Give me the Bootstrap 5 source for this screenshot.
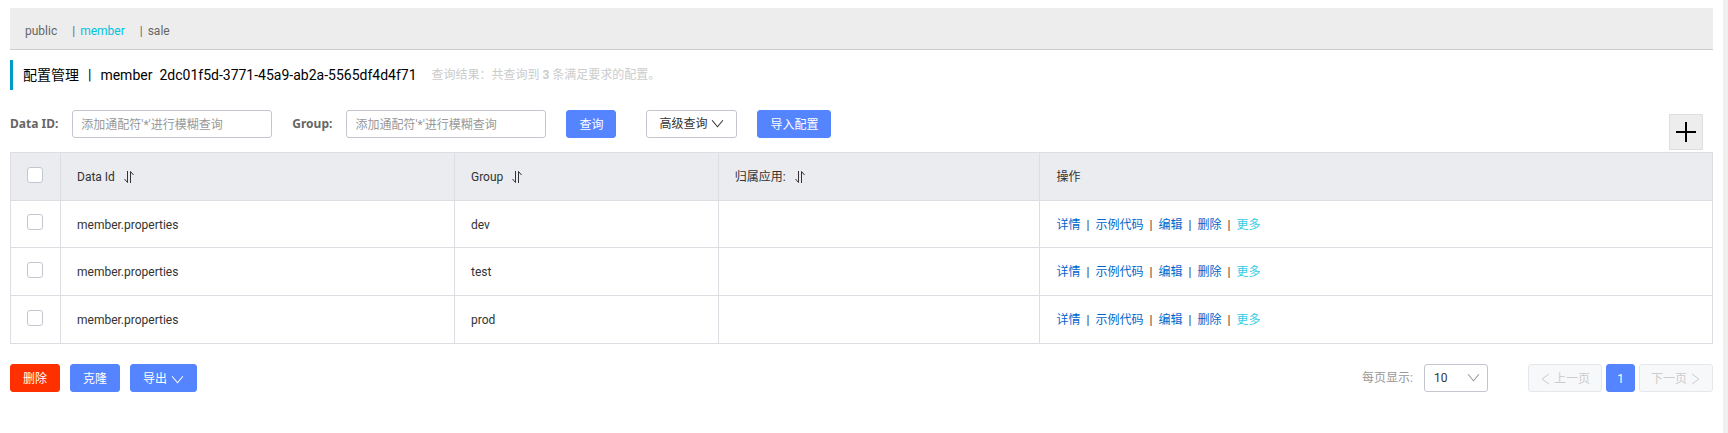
<!DOCTYPE html>
<html lang="zh-CN">
<head>
<meta charset="utf-8">
<meta name="viewport" content="width=device-width, initial-scale=1">
<title>配置管理</title>
<link href="https://cdn.jsdelivr.net/npm/bootstrap@5.3.0/dist/css/bootstrap.min.css" rel="stylesheet">
<style>
body{font-family:Roboto,"Noto Sans CJK SC",sans-serif;font-size:12px;line-height:18px;color:#333}
a{text-decoration:none}
svg{display:block;fill:none;stroke:currentColor;flex:none}
.page{min-height:100vh;padding:8px 10px;border-right:5px solid #f0f0f0}
.ns-bar{background:#ededed;border-bottom:1px solid #ccc;padding:14px 15px 9px;color:#666}
.ns-bar a{color:#666}
.ns-bar a.active{color:#00c1de}
.ns-bar li+li::before{content:"|";margin:0 5px 0 15px;color:#666}
.title-bar{margin-top:10px;height:30px;border-left:3px solid #09c;padding-left:10px}
.title-bar h1{font-size:14px;line-height:30px;font-weight:400;color:#000}
.title-bar .sep{margin:0 9px}
.title-bar .ns-id{margin-left:7px}
.hint{color:#ccc;margin-left:15px}
.tools{margin-top:20px;height:42px}
.tools label{font-family:"Noto Sans",sans-serif;font-weight:700;color:#666;line-height:28px;margin-right:14px}
.gap-before{margin-left:20px}
.gap-wide{margin-left:30px}
.field{width:200px;height:28px;border:1px solid #c4c6cf;border-radius:3px;padding:1px 8px 0;color:#333;font-size:12px}
.field::placeholder{color:#999;opacity:1}
.btn{--bs-btn-font-size:12px;--bs-btn-line-height:18px;--bs-btn-padding-x:12px;--bs-btn-padding-y:4px;--bs-btn-border-radius:3px;height:28px;padding-top:5px;padding-bottom:3px}
.btn-primary{--bs-btn-bg:#5584ff;--bs-btn-border-color:#5584ff}
.btn-danger{--bs-btn-bg:#ff3000;--bs-btn-border-color:#ff3000}
.btn-plain{--bs-btn-bg:#fff;--bs-btn-border-color:#c4c6cf;--bs-btn-color:#333;padding-top:2px}
.btn-add{width:34px;height:36px;background:#ededed;border:1px solid #dcdee3;color:#000;margin:0 10px 2px 0}
.grid-table{table-layout:fixed;--bs-table-color:#333;--bs-table-border-color:#dcdee3;border-color:#dcdee3}
.grid-table th{background:#ebecf0;font-weight:400;height:48px}
.grid-table td{height:48px}
.grid-table tbody tr:first-child td{height:47px}
.grid-table>:not(caption)>*>*{padding:1px 16px 0;vertical-align:middle}
.grid-table input{display:block;width:16px;height:16px;margin:0 0 5px;border:1px solid #c4c6cf;border-radius:3px;background-color:#fff}
.grid-table td a{color:#06c}
.grid-table td a.more{color:#33cde5}
.ops i{font-style:normal;width:15px;text-align:center}
.c-check{width:50px}.c-data{width:23.15%}.c-group{width:15.5%}.c-app{width:18.9%}
.foot{margin-top:20px}
.size-box{position:relative;color:#999}
.size-box label{margin-right:11px}
.size-box select{appearance:none;width:64px;height:28px;border:1px solid #c4c6cf;border-radius:3px;background:#fff;padding:0 9px;color:#333}
.size-box svg{position:absolute;right:8px;top:7px;pointer-events:none}
.pages{margin-left:40px}
.btn-page{--bs-btn-disabled-bg:#f7f8fa;--bs-btn-disabled-border-color:#e6e7eb;--bs-btn-disabled-color:#ccc;--bs-btn-disabled-opacity:1;width:74px}
.btn-num{width:29px}
</style>
</head>
<body>
<svg width="0" height="0" class="position-absolute" aria-hidden="true">
<symbol id="down" viewBox="0 0 12 12"><path d="M1 3l5 6 5-6"/></symbol>
<symbol id="sort" viewBox="0 0 12 14"><path d="M4.500 1v11.500L1.500 9M7.500 13V1.500L10.500 5"/></symbol>
</svg>
<main class="page">
<nav class="ns-bar"><ul class="list-unstyled d-flex mb-0">
<li><a href="#">public</a></li><li><a href="#" class="active">member</a></li><li><a href="#">sale</a></li>
</ul></nav>
<header class="title-bar d-flex align-items-center">
<h1 class="mb-0">配置管理<span class="sep">|</span>member<span class="ns-id">2dc01f5d-3771-45a9-ab2a-5565df4d4f71</span></h1>
<span class="hint">查询结果：共查询到 <strong>3</strong> 条满足要求的配置。</span>
</header>
<form class="tools d-flex align-items-start">
<label for="dataId">Data ID:</label><input id="dataId" class="field" placeholder="添加通配符'*'进行模糊查询">
<label for="group" class="gap-before">Group:</label><input id="group" class="field" placeholder="添加通配符'*'进行模糊查询">
<button type="button" class="btn btn-primary gap-before">查询</button>
<button type="button" class="btn btn-plain gap-wide d-flex align-items-center">高级查询<svg class="ms-1" width="13" height="13"><use href="#down"/></svg></button>
<button type="button" class="btn btn-primary gap-before">导入配置</button>
<button type="button" class="btn-add d-flex align-items-center justify-content-center p-0 ms-auto align-self-end" aria-label="新建配置"><svg width="20" height="20" stroke-width="2"><path d="M10 0v20M0 10h20"/></svg></button>
</form>
<table class="table table-bordered grid-table mb-0">
<colgroup><col class="c-check"><col class="c-data"><col class="c-group"><col class="c-app"><col></colgroup>
<thead><tr>
<th><input type="checkbox" class="form-check-input" aria-label="全选"></th>
<th><span class="d-flex align-items-center gap-2">Data Id<svg width="12" height="14"><use href="#sort"/></svg></span></th>
<th><span class="d-flex align-items-center gap-2">Group<svg width="12" height="14"><use href="#sort"/></svg></span></th>
<th><span class="d-flex align-items-center gap-2">归属应用:<svg width="12" height="14"><use href="#sort"/></svg></span></th>
<th>操作</th>
</tr></thead>
<tbody>
<tr><td><input type="checkbox" class="form-check-input" aria-label="dev"></td><td>member.properties</td><td>dev</td><td></td><td><div class="ops d-flex"><a href="#">详情</a><i>|</i><a href="#">示例代码</a><i>|</i><a href="#">编辑</a><i>|</i><a href="#">删除</a><i>|</i><a href="#" class="more">更多</a></div></td></tr>
<tr><td><input type="checkbox" class="form-check-input" aria-label="test"></td><td>member.properties</td><td>test</td><td></td><td><div class="ops d-flex"><a href="#">详情</a><i>|</i><a href="#">示例代码</a><i>|</i><a href="#">编辑</a><i>|</i><a href="#">删除</a><i>|</i><a href="#" class="more">更多</a></div></td></tr>
<tr><td><input type="checkbox" class="form-check-input" aria-label="prod"></td><td>member.properties</td><td>prod</td><td></td><td><div class="ops d-flex"><a href="#">详情</a><i>|</i><a href="#">示例代码</a><i>|</i><a href="#">编辑</a><i>|</i><a href="#">删除</a><i>|</i><a href="#" class="more">更多</a></div></td></tr>
</tbody>
</table>
<footer class="foot d-flex align-items-center">
<div class="d-flex" style="gap:10px">
<button type="button" class="btn btn-danger">删除</button>
<button type="button" class="btn btn-primary">克隆</button>
<button type="button" class="btn btn-primary d-flex align-items-center">导出<svg class="ms-1" width="13" height="13"><use href="#down"/></svg></button>
</div>
<div class="size-box d-flex align-items-center ms-auto"><label for="size">每页显示:</label><select id="size"><option>10</option><option>20</option></select><svg width="13" height="13"><use href="#down"/></svg></div>
<div class="pages d-flex gap-1">
<button type="button" class="btn btn-page d-flex align-items-center justify-content-center px-0" disabled><svg class="me-1" width="10" height="12"><path d="M9 1L2 6l7 5"/></svg>上一页</button>
<button type="button" class="btn btn-primary btn-num px-0">1</button>
<button type="button" class="btn btn-page d-flex align-items-center justify-content-center px-0" disabled>下一页<svg class="ms-1" width="10" height="12"><path d="M1 1l7 5-7 5"/></svg></button>
</div>
</footer>
</main>
<script src="https://cdn.jsdelivr.net/npm/bootstrap@5.3.0/dist/js/bootstrap.bundle.min.js"></script>
</body>
</html>
